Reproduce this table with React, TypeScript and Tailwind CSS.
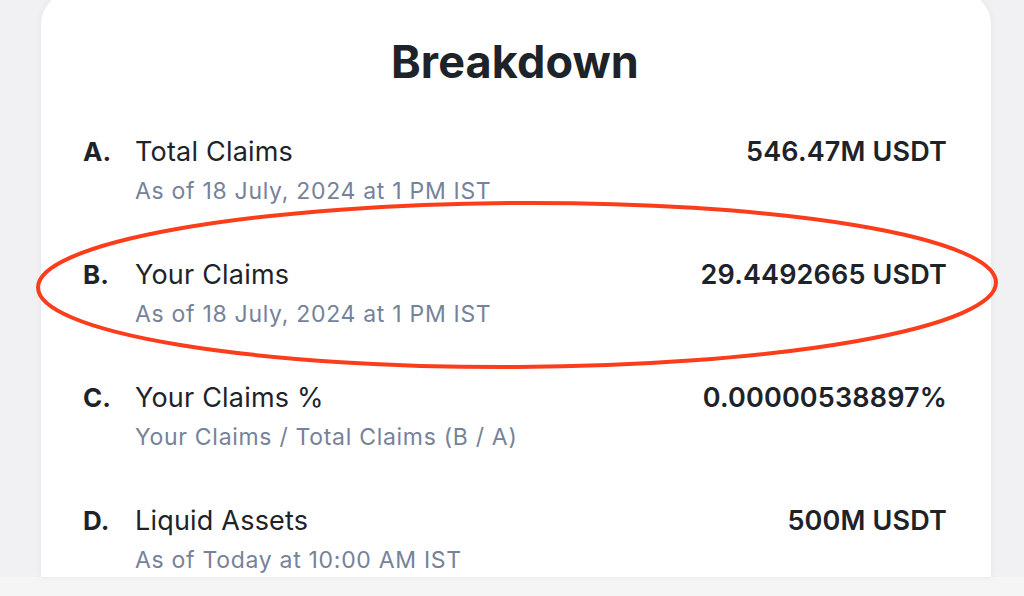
const rows = [
  { letter: 'A.', label: 'Total Claims', sub: 'As of 18 July, 2024 at 1 PM IST', value: '546.47M USDT' },
  { letter: 'B.', label: 'Your Claims', sub: 'As of 18 July, 2024 at 1 PM IST', value: '29.4492665 USDT' },
  { letter: 'C.', label: 'Your Claims %', sub: 'Your Claims / Total Claims (B / A)', value: '0.00000538897%' },
  { letter: 'D.', label: 'Liquid Assets', sub: 'As of Today at 10:00 AM IST', value: '500M USDT' },
];

export default function App() {
  return (
    <div
      className="w-[1024px] h-[596px] overflow-hidden bg-[#f1f1f3] flex flex-col"
      style={{ fontFamily: '"Inter", "Noto Sans", sans-serif' }}
    >
      <div className="relative ml-[41px] w-[950px] mt-[-8px] h-[585px] shrink-0 rounded-[32px] rounded-b-none bg-white shadow-[0_0_6px_rgba(0,0,0,0.06)] pl-[42px] pr-[44px]">
        <h1 className="pt-[42px] text-center text-[45px] leading-[56px] font-bold text-[#1e2329] tracking-[0.1px]">
          Breakdown
        </h1>

        <div className="mt-[44px] flex flex-col gap-[51px]">
          {rows.map((row) => (
            <div key={row.letter} className="flex justify-between">
              <div className="flex">
                <span className="w-[52px] text-[26px] leading-[36px] font-bold text-[#1e2329]">{row.letter}</span>
                <div className="flex flex-col gap-[6px]">
                  <span className="text-[27px] leading-[36px] text-[#1e2329] tracking-[0.2px]">{row.label}</span>
                  <span className="text-[23px] leading-[30px] text-[#76829a] tracking-[0.7px]">{row.sub}</span>
                </div>
              </div>
              <span className="text-[27px] leading-[36px] font-semibold text-[#1e2329] tracking-[0.15px]">{row.value}</span>
            </div>
          ))}
        </div>

        {/* hand-drawn highlight around row B */}
        <svg
          className="absolute pointer-events-none"
          style={{ left: -10, top: 203 }}
          width="980"
          height="185"
          viewBox="0 0 980 185"
        >
          <ellipse cx="486" cy="90" rx="479" ry="82" fill="none" stroke="#fb3d1c" strokeWidth="4" transform="rotate(-0.3 486 90)" />
        </svg>
      </div>
      <div className="flex-1 bg-[#f5f5f6]" />
    </div>
  );
}
